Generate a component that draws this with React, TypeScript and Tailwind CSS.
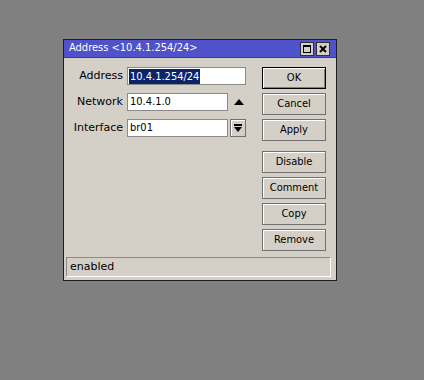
import React from "react";

const condensed = { fontFamily: '"DejaVu Sans Condensed", "DejaVu Sans", Verdana, sans-serif', fontStretch: "condensed" };
const regular = { fontFamily: '"DejaVu Sans", Verdana, sans-serif', fontStretch: "normal" };

function Btn({ label, primary = false }: { label: string; primary?: boolean }) {
  return (
    <div
      className={
        "flex h-[22px] w-[64px] items-center justify-center text-[11px] text-black " +
        (primary
          ? "border border-black shadow-[inset_1px_1px_0_#ffffff,inset_-1px_-1px_0_#808080]"
          : "border border-[#707070] shadow-[inset_1px_1px_0_#ffffff]")
      }
    >
      {label}
    </div>
  );
}

function Field({ label, children }: { label: string; children: React.ReactNode }) {
  return (
    <div className="flex h-[18px] items-center">
      <div className="w-[57px] text-right text-[11px] text-black" style={regular}>
        {label}
      </div>
      <div className="ml-[4px] flex items-center">{children}</div>
    </div>
  );
}

export default function App() {
  return (
    <div className="h-[380px] w-[424px] bg-[#808080] pl-[63px] pt-[39px]" style={condensed}>
      <div className="w-[274px] border border-[#1c1c1c] bg-[#d4d0c8]">
        {/* title bar */}
        <div className="flex h-[17px] items-center justify-between bg-[#5052c9] pl-[5px] pr-[6px]">
          <span className="text-[11px] text-white">Address &lt;10.4.1.254/24&gt;</span>
          <div className="flex gap-[2px]">
            <div className="flex h-[14px] w-[14px] items-center justify-center border border-[#303030] bg-[#d4d0c8]">
              <div className="h-[8px] w-[8px] border border-black border-t-2" />
            </div>
            <div className="flex h-[14px] w-[14px] items-center justify-center border border-[#303030] bg-[#d4d0c8]">
              <svg width="8" height="8" viewBox="0 0 8 8">
                <path d="M1 1 L7 7 M7 1 L1 7" stroke="#000" strokeWidth="2" />
              </svg>
            </div>
          </div>
        </div>
        <div className="h-px bg-[#404040]" />

        {/* body */}
        <div className="flex pl-[2px] pr-[10px] pt-[9px]">
          <div className="flex flex-1 flex-col gap-[8px]">
            <Field label="Address">
              <div className="flex h-[18px] w-[119px] items-center border border-[#8a8a8a] bg-white pl-[1px]">
                <span className="bg-[#0a246a] px-[1px] text-[11px] leading-[15px] text-white">10.4.1.254/24</span>
              </div>
            </Field>
            <Field label="Network">
              <div className="flex h-[18px] w-[101px] items-center border border-[#8a8a8a] bg-white pl-[2px] text-[11px] text-black">
                10.4.1.0
              </div>
              <svg className="ml-[6px]" width="10" height="6" viewBox="0 0 10 6">
                <path d="M5 0 L10 6 L0 6 Z" fill="#000" />
              </svg>
            </Field>
            <Field label="Interface">
              <div className="flex h-[18px] w-[101px] items-center border border-[#8a8a8a] bg-white pl-[2px] text-[11px] text-black">
                br01
              </div>
              <div className="ml-[2px] flex h-[18px] w-[16px] items-center justify-center border border-[#707070] shadow-[inset_1px_1px_0_#ffffff]">
                <svg width="8" height="9" viewBox="0 0 8 9">
                  <rect x="0" y="0" width="8" height="2" fill="#000" />
                  <path d="M0 3 L8 3 L4 8 Z" fill="#000" />
                </svg>
              </div>
            </Field>
          </div>
          <div className="flex flex-col gap-[4px]">
            <Btn label="OK" primary />
            <Btn label="Cancel" />
            <Btn label="Apply" />
            <div className="h-[2px]" />
            <Btn label="Disable" />
            <Btn label="Comment" />
            <Btn label="Copy" />
            <Btn label="Remove" />
          </div>
        </div>

        {/* status bar */}
        <div className="pb-[3px] pl-[2px] pr-[5px] pt-[6px]">
          <div
            className="flex h-[20px] items-center border border-[#8a8a8a] border-b-white border-r-white pl-[3px] text-[11px] text-black"
            style={regular}
          >
            enabled
          </div>
        </div>
      </div>
    </div>
  );
}
